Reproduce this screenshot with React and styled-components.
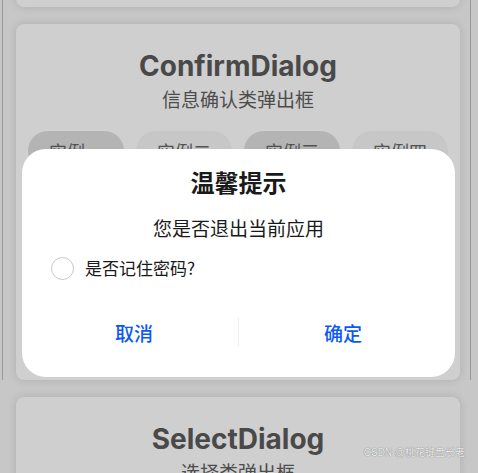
import React, { useState } from 'react'
import styled, { createGlobalStyle } from 'styled-components'

const GlobalStyle = createGlobalStyle`
	html, body {
		margin: 0;
		padding: 0;
		background: #f5f5f5;
		font-family: Inter, 'Noto Sans', 'Noto Sans CJK SC', sans-serif;
	}
`

const demos = [
	{ title: 'ConfirmDialog', subtitle: '信息确认类弹出框', chips: ['实例一', '实例二', '实例三', '实例四'] },
	{ title: 'SelectDialog', subtitle: '选择类弹出框' },
]

const Screen = styled.div`
	position: relative;
	width: 478px;
	height: 473px;
	overflow: hidden;
	box-sizing: border-box;
	background: #f5f5f5;
`

const Frame = styled.div`
	height: 100%;
	margin: 0 7px 0 2px;
	border-left: 1px solid #bdbdbd;
	border-right: 1px solid #bdbdbd;
	box-sizing: border-box;
`

const Column = styled.div`
	display: flex;
	flex-direction: column;
	gap: 17px;
	padding: 0 10px 0 13px;
	/* list is scrolled so the card above only peeks in at the top */
	margin-top: -93px;
`

const Card = styled.section`
	display: flex;
	flex-direction: column;
	align-items: center;
	background: #ffffff;
	border-radius: 8px;
	box-shadow: 0 0 10px rgba(0, 0, 0, 0.12);
	padding: 24px 12px 0;
	height: ${(p) => p.$height}px;
	box-sizing: border-box;
`

const CardTitle = styled.h2`
	margin: 0;
	font-size: 28px;
	line-height: 36px;
	font-weight: 700;
	color: #5a5a5a;
`

const CardSubtitle = styled.p`
	margin: 1px 0 0;
	font-size: 19px;
	line-height: 27px;
	color: #5e5e5e;
	font-family: 'Noto Sans CJK SC', sans-serif;
`

const ChipRow = styled.div`
	display: grid;
	grid-template-columns: repeat(4, 1fr);
	gap: 12px;
	width: 100%;
	margin-top: 19px;
`

const Chip = styled.button`
	height: 40px;
	border: none;
	border-radius: 20px;
	background: ${(p) => (p.$active ? '#dedede' : '#f6f6f6')};
	color: #666;
	font-size: 18px;
	font-family: 'Noto Sans CJK SC', sans-serif;
	padding: 0;
`

const Mask = styled.div`
	position: absolute;
	inset: 0;
	background: rgba(0, 0, 0, 0.19);
`

const Dialog = styled.div`
	position: absolute;
	left: 22px;
	top: 149px;
	width: 433px;
	height: 228px;
	box-sizing: border-box;
	background: #fff;
	border-radius: 24px;
	padding: 16px 0 25px;
	display: flex;
	flex-direction: column;
	font-family: 'Noto Sans CJK SC', sans-serif;
`

const DialogTitle = styled.h3`
	margin: 0;
	text-align: center;
	font-size: 24px;
	line-height: 34px;
	font-weight: 700;
	color: #1a1a1a;
`

const Message = styled.p`
	margin: 15px 0 0;
	text-align: center;
	font-size: 19px;
	line-height: 27px;
	color: #1a1a1a;
`

const CheckRow = styled.label`
	display: flex;
	align-items: center;
	gap: 11px;
	margin: 15px 0 0;
	padding: 0 29px;
	font-size: 17px;
	line-height: 24px;
	color: #1a1a1a;
	cursor: pointer;
`

const Circle = styled.span`
	width: 23px;
	height: 23px;
	box-sizing: border-box;
	border-radius: 50%;
	border: 1.5px solid ${(p) => (p.$on ? '#0a59f7' : '#c8c8c8')};
	background: ${(p) => (p.$on ? '#0a59f7' : '#fff')};
	flex-shrink: 0;
`

const Buttons = styled.div`
	display: flex;
	align-items: center;
	margin-top: auto;
	padding: 0 8px;
	height: 40px;
`

const Action = styled.button`
	flex: 1;
	height: 40px;
	border: none;
	background: none;
	color: #0a59f7;
	font-size: 19px;
	font-weight: 500;
	font-family: 'Noto Sans CJK SC', sans-serif;
	padding: 0;
`

const Divider = styled.span`
	width: 1px;
	height: 30px;
	background: #efefef;
`

const Watermark = styled.span`
	position: absolute;
	right: 13px;
	bottom: 14px;
	font-size: 10px;
	line-height: 12px;
	color: #ececec;
	text-shadow: 0 0 1px #8a8a8a, 0 0 1px #8a8a8a;
	font-family: 'Liberation Sans', 'Noto Sans CJK SC', sans-serif;
`

export default function App() {
	const [remember, setRemember] = useState(false)
	return (
		<>
			<GlobalStyle />
			<Screen>
				<Frame>
					<Column>
						<Card $height={100} />
						{demos.map((d, i) => (
							<Card key={d.title} $height={i === 0 ? 356 : 200}>
								<CardTitle>{d.title}</CardTitle>
								<CardSubtitle>{d.subtitle}</CardSubtitle>
								{d.chips && (
									<ChipRow>
										{d.chips.map((c, j) => (
											<Chip key={c} $active={j % 2 === 0}>
												{c}
											</Chip>
										))}
									</ChipRow>
								)}
							</Card>
						))}
					</Column>
				</Frame>
				<Mask />
				<Dialog>
					<DialogTitle>温馨提示</DialogTitle>
					<Message>您是否退出当前应用</Message>
					<CheckRow onClick={() => setRemember(!remember)}>
						<Circle $on={remember} />
						是否记住密码?
					</CheckRow>
					<Buttons>
						<Action>取消</Action>
						<Divider />
						<Action>确定</Action>
					</Buttons>
				</Dialog>
				<Watermark>CSDN @桃花键盘长老</Watermark>
			</Screen>
		</>
	)
}
